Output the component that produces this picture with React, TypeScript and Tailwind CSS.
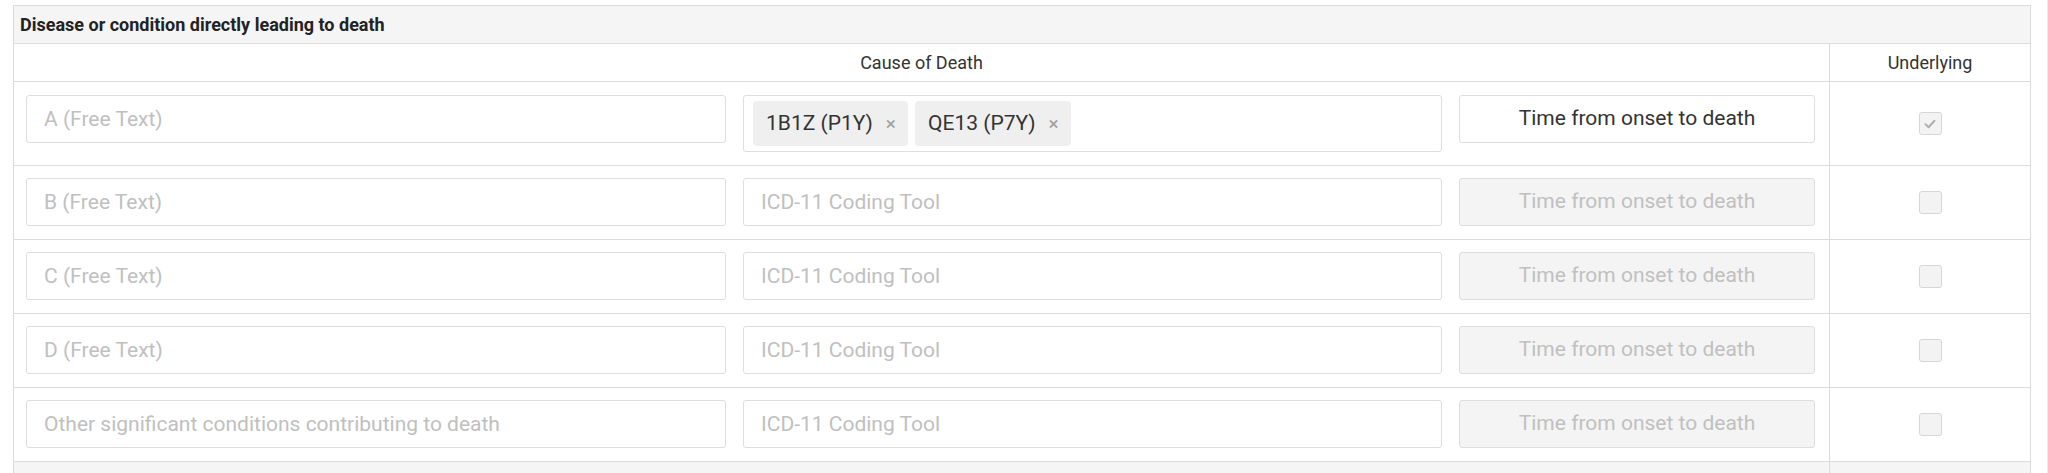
import React from "react";

const inputBase =
  "h-[48px] w-full rounded-[3px] border border-[#dedede] bg-white px-[17px] text-[21px] text-[#333] outline-none placeholder:text-[#c0c0c0]";

function Checkbox({ checked }: { checked?: boolean }) {
  return (
    <div className="flex h-[23px] w-[23px] items-center justify-center rounded-[3px] border border-[#d6d6d6] bg-[#f3f3f3]">
      {checked && (
        <svg width="14" height="14" viewBox="0 0 14 14" fill="none">
          <path d="M2.5 7.3 L5.6 10.2 L11.5 3.8" stroke="#b0b0b0" strokeWidth="2" strokeLinecap="round" strokeLinejoin="round" />
        </svg>
      )}
    </div>
  );
}

function Chip({ label }: { label: string }) {
  return (
    <div className="flex h-[45px] items-center rounded-[4px] bg-[#efefef] pl-[13px] pr-[12px] text-[21px] text-[#333]">
      <span>{label}</span>
      <span className="ml-[13px] text-[19px] leading-none text-[#a0a0a0]">×</span>
    </div>
  );
}

const otherRows = [
  "B (Free Text)",
  "C (Free Text)",
  "D (Free Text)",
  "Other significant conditions contributing to death",
];

export default function App() {
  return (
    <div className="h-[473px] w-[2048px] overflow-hidden border-r border-[#ececec] bg-white font-['Roboto','Liberation_Sans',sans-serif]">
      <div className="pl-[13px] pt-[5px]">
        <div className="w-[2018px] border border-[#dcdcdc]">
          <div className="flex h-[38px] items-center border-b border-[#dcdcdc] bg-[#f5f5f5] pl-[6px] text-[18px] font-bold text-[#222]">
            Disease or condition directly leading to death
          </div>
          <div className="flex h-[38px] border-b border-[#dcdcdc] text-[18px] text-[#333]">
            <div className="flex w-[1816px] items-center justify-center border-r border-[#dcdcdc]">Cause of Death</div>
            <div className="flex flex-1 items-center justify-center">Underlying</div>
          </div>

          <div className="flex h-[84px] border-b border-[#dcdcdc]">
            <div className="grid w-[1816px] grid-cols-[700px_699px_356px] items-start gap-[17px] border-r border-[#dcdcdc] pl-[12px] pt-[13px]">
              <input className={inputBase} placeholder="A (Free Text)" />
              <div className="flex h-[57px] items-center gap-[7px] rounded-[3px] border border-[#dedede] bg-white pl-[9px]">
                <Chip label="1B1Z (P1Y)" />
                <Chip label="QE13 (P7Y)" />
              </div>
              <div className="flex h-[48px] items-center justify-center rounded-[3px] border border-[#dedede] bg-white text-[21px] text-[#333]">
                Time from onset to death
              </div>
            </div>
            <div className="flex flex-1 items-center justify-center">
              <Checkbox checked />
            </div>
          </div>

          {otherRows.map((label) => (
            <div key={label} className="flex h-[74px] border-b border-[#dcdcdc]">
              <div className="grid w-[1816px] grid-cols-[700px_699px_356px] items-start gap-[17px] border-r border-[#dcdcdc] pl-[12px] pt-[12px]">
                <input className={inputBase} placeholder={label} />
                <input className={inputBase} placeholder="ICD-11 Coding Tool" />
                <div className="flex h-[48px] items-center justify-center rounded-[3px] border border-[#dedede] bg-[#f4f4f4] text-[21px] text-[#c0c0c0]">
                  Time from onset to death
                </div>
              </div>
              <div className="flex flex-1 items-center justify-center">
                <Checkbox />
              </div>
            </div>
          ))}

          <div className="flex h-[40px] bg-[#f5f5f5]">
            <div className="w-[1816px] border-r border-[#dcdcdc]" />
          </div>
        </div>
      </div>
    </div>
  );
}
